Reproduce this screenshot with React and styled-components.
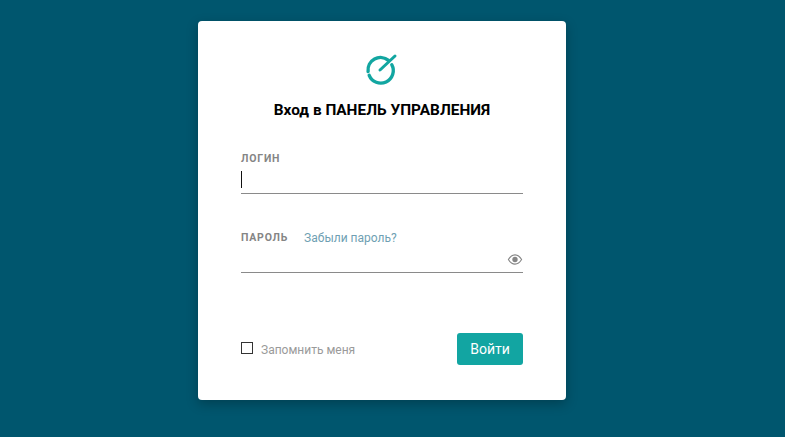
import React from 'react';
import styled, { createGlobalStyle } from 'styled-components';

const Global = createGlobalStyle`
  html, body {
    margin: 0;
    padding: 0;
    height: 100%;
    background: #00566e;
    font-family: Roboto, "Liberation Sans", sans-serif;
    overflow: hidden;
  }
`;

const Page = styled.main`
  display: flex;
  justify-content: center;
  padding: 21px 21px 0 0;
`;

const Card = styled.section`
  box-sizing: border-box;
  width: 368px;
  height: 379px;
  padding: 30px 43px 0;
  background: #fff;
  border-radius: 4px;
  box-shadow: 0 4px 12px rgba(0, 0, 0, 0.25);
  display: flex;
  flex-direction: column;
`;

const Logo = styled.svg`
  display: block;
  align-self: center;
  width: 34px;
  height: 36px;
`;

const Title = styled.h1`
  margin: 13px 0 0;
  font-size: 15.4px;
  line-height: 20px;
  font-weight: 700;
  color: #000;
  text-align: center;
  white-space: nowrap;
`;

const Field = styled.div`
  margin-top: ${(p) => p.$top}px;
`;

const LabelRow = styled.div`
  display: flex;
  align-items: center;
  gap: 16px;
  height: 16px;
`;

const Label = styled.label`
  font-size: 10.5px;
  font-weight: 700;
  letter-spacing: 0.8px;
  color: #858585;
`;

const Forgot = styled.a`
  font-size: 12px;
  line-height: 16px;
  padding-top: 1px;
  color: #6f9fb3;
  text-decoration: none;
`;

const InputBox = styled.div`
  display: flex;
  align-items: center;
  justify-content: ${(p) => (p.$end ? 'flex-end' : 'flex-start')};
  box-sizing: border-box;
  height: 28px;
  border-bottom: 1px solid #8a8a8a;
`;

const Caret = styled.span`
  display: block;
  width: 1px;
  height: 17px;
  background: #111;
`;

const Eye = styled.svg`
  display: block;
  width: 16px;
  height: 11px;
  margin-top: 1px;
`;

const Footer = styled.div`
  display: flex;
  align-items: center;
  justify-content: space-between;
  margin-top: 60px;
`;

const Remember = styled.label`
  display: flex;
  align-items: center;
  gap: 8px;
  padding-top: 2px;
  font-size: 12px;
  color: #9a9a9a;
`;

const Box = styled.span`
  display: block;
  box-sizing: border-box;
  width: 12px;
  height: 12px;
  margin-top: -5px;
  border: 1px solid #333;
`;

const Submit = styled.button`
  width: 66px;
  height: 32px;
  border: 0;
  border-radius: 3px;
  background: #12a5a2;
  color: #fff;
  font-family: inherit;
  font-size: 14px;
`;

export default function App() {
  return (
    <>
      <Global />
      <Page>
        <Card>
          <Logo viewBox="0 0 34 36" fill="none" stroke="#12a6a1" strokeWidth="3.4" strokeLinecap="round">
            <path d="M3.1 20.5 A12.5 12.5 0 0 1 23.5 9.4" />
            <path d="M4.2 24.3 A12.5 12.5 0 1 0 26.8 13.7" />
            <path d="M15 19 L30 5" strokeWidth="3" />
          </Logo>
          <Title>Вход в ПАНЕЛЬ УПРАВЛЕНИЯ</Title>
          <Field $top={30}>
            <LabelRow>
              <Label>ЛОГИН</Label>
            </LabelRow>
            <InputBox>
              <Caret />
            </InputBox>
          </Field>
          <Field $top={35}>
            <LabelRow>
              <Label>ПАРОЛЬ</Label>
              <Forgot>Забыли пароль?</Forgot>
            </LabelRow>
            <InputBox $end>
              <Eye viewBox="0 0 16 12" fill="none" stroke="#858585" strokeWidth="1.2">
                <path d="M0.8 6 C3 2.4 5.4 1 8 1 C10.6 1 13 2.4 15.2 6 C13 9.6 10.6 11 8 11 C5.4 11 3 9.6 0.8 6 Z" />
                <circle cx="8" cy="6" r="2.9" fill="#858585" stroke="none" />
              </Eye>
            </InputBox>
          </Field>
          <Footer>
            <Remember>
              <Box />
              Запомнить меня
            </Remember>
            <Submit>Войти</Submit>
          </Footer>
        </Card>
      </Page>
    </>
  );
}
